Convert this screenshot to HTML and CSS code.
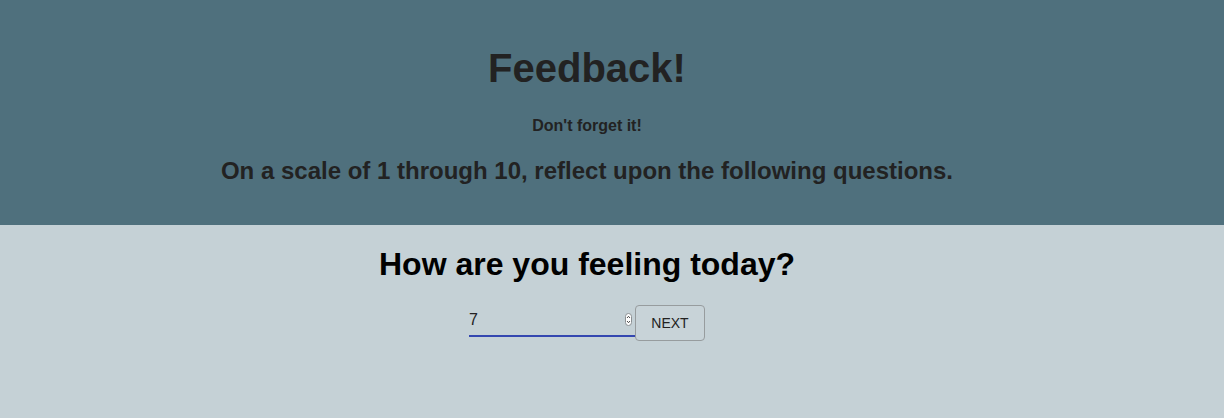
FILE: index.html
```html
<!DOCTYPE html>
<html lang="en">
<head>
<meta charset="utf-8">
<title>Feedback</title>
<link rel="stylesheet" href="styles.css">
</head>
<body>
  <header class="hero">
    <h1 class="hero-title">Feedback!</h1>
    <h4 class="hero-sub">Don't forget it!</h4>
    <h3 class="hero-lead">On a scale of 1 through 10, reflect upon the following questions.</h3>
  </header>
  <main class="question">
    <h2 class="question-title">How are you feeling today?</h2>
    <form class="answer">
      <div class="field">
        <input class="field-input" type="number" value="7" min="1" max="10">
        <span class="spinner">
          <svg width="7" height="13" viewBox="0 0 7 13"><rect x="0.5" y="0.5" width="6" height="12" rx="3" fill="#fff" stroke="#8a8f92"/><path d="M2 5 L3.5 3.3 L5 5" fill="none" stroke="#333" stroke-width="0.9"/><path d="M2 8 L3.5 9.7 L5 8" fill="none" stroke="#333" stroke-width="0.9"/></svg>
        </span>
      </div>
      <button class="next" type="button">NEXT</button>
    </form>
  </main>
</body>
</html>
```

FILE: styles.css
```css
html, body {
  margin: 0;
  padding: 0;
}
body {
  background: #c5d1d6;
  font-family: "Liberation Sans", Arial, Helvetica, sans-serif;
  min-height: 418px;
}
.hero {
  background: #4f707d;
  color: #222;
  text-align: center;
  padding: 45px 50px 40px 0;
}
.hero-title {
  margin: 0;
  font-size: 40px;
  line-height: 46px;
  font-weight: bold;
}
.hero-sub {
  margin: 26px 0 0;
  font-size: 16px;
  line-height: 18px;
  font-weight: bold;
}
.hero-lead {
  margin: 22px 0 0;
  font-size: 24px;
  line-height: 28px;
  font-weight: bold;
}
.question {
  text-align: center;
  padding: 21px 50px 0 0;
  color: #000;
}
.question-title {
  margin: 0;
  font-size: 32px;
  line-height: 37px;
  font-weight: bold;
}
.answer {
  display: flex;
  justify-content: center;
  align-items: flex-start;
  margin-top: 22px;
}
.field {
  position: relative;
  width: 166px;
  height: 30px;
  border-bottom: 2px solid #3447b0;
}
.field-input {
  width: 100%;
  height: 30px;
  box-sizing: border-box;
  border: none;
  background: transparent;
  font-family: "Liberation Sans", Arial, sans-serif;
  font-size: 16px;
  color: #222;
  padding: 0;
  margin: 0;
  outline: none;
  -moz-appearance: textfield;
}
.field-input::-webkit-outer-spin-button,
.field-input::-webkit-inner-spin-button {
  -webkit-appearance: none;
  margin: 0;
}
.spinner {
  position: absolute;
  right: 3px;
  top: 8px;
  width: 7px;
  height: 13px;
  display: block;
}
.spinner svg {
  display: block;
}
.next {
  width: 70px;
  height: 36px;
  box-sizing: border-box;
  border: 1px solid #979c9e;
  border-radius: 4px;
  background: #c8d3d8;
  color: #222;
  font-family: "Liberation Sans", Arial, sans-serif;
  font-size: 14px;
  padding: 0;
  cursor: pointer;
}
```
